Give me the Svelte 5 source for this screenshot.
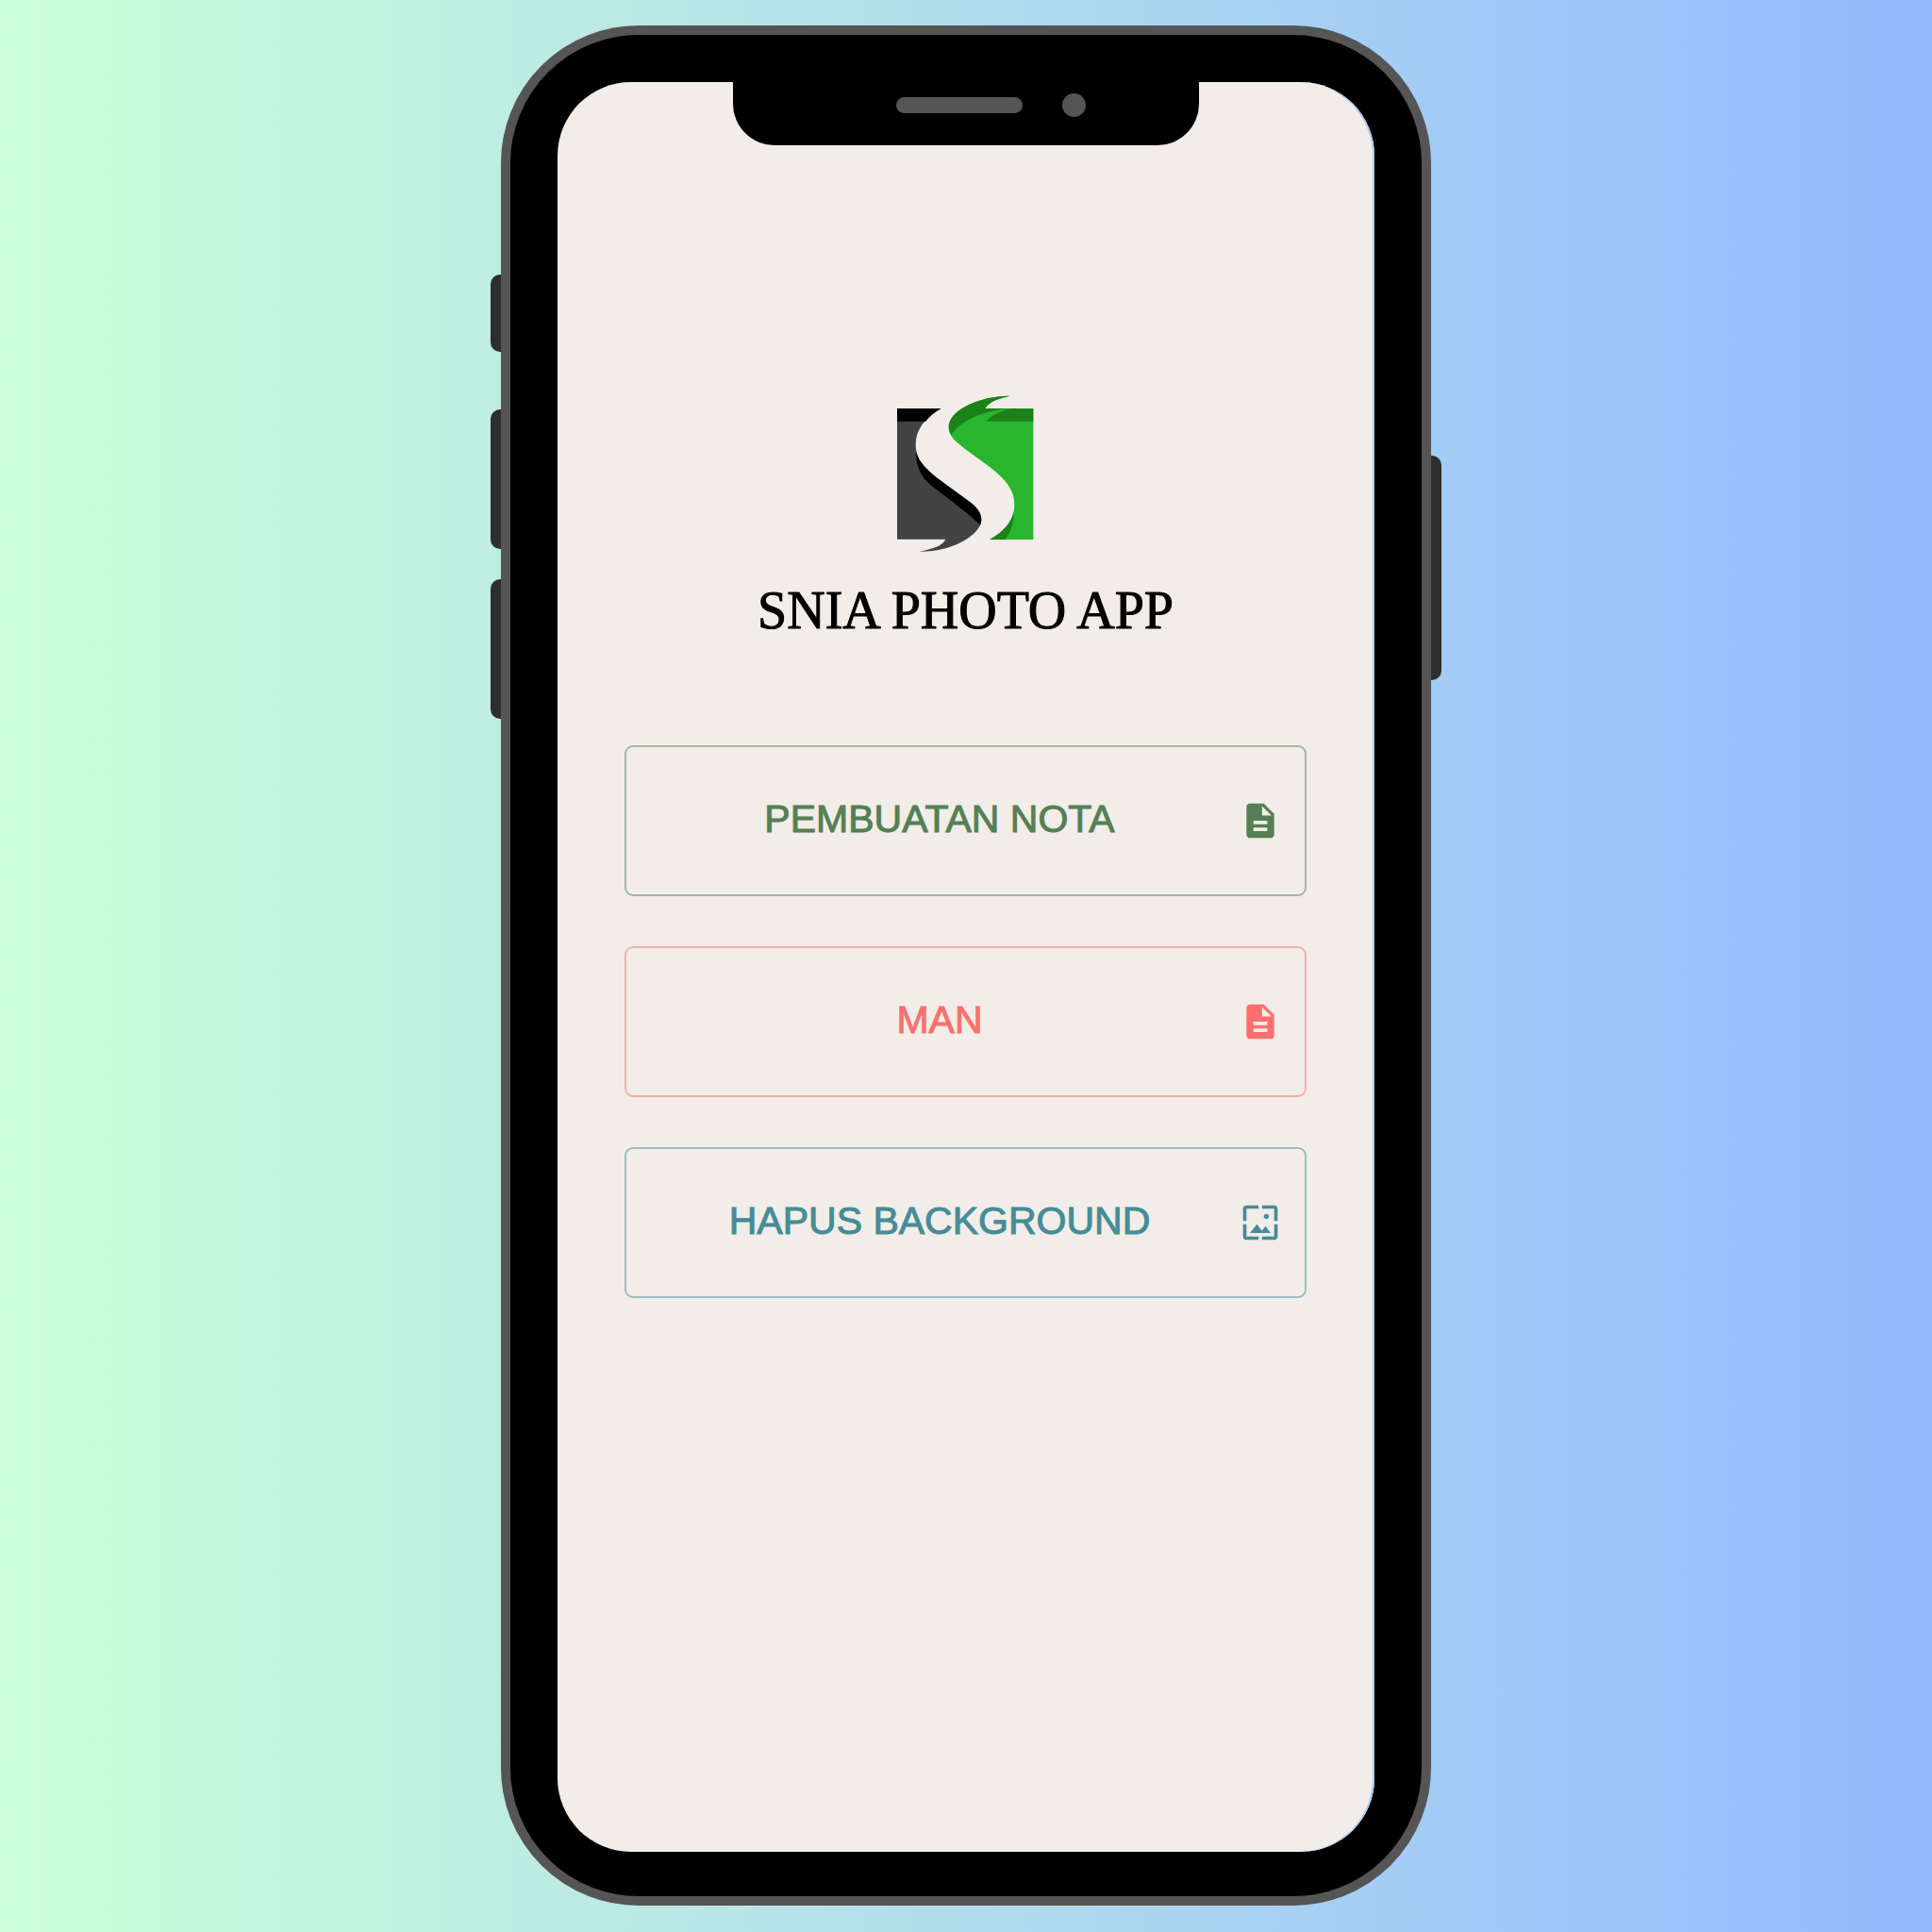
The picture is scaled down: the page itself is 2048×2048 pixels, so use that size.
<script>
  const actions = [
    { label: 'PEMBUATAN NOTA', tone: 'green', icon: 'note' },
    { label: 'MAN', tone: 'coral', icon: 'note' },
    { label: 'HAPUS BACKGROUND', tone: 'teal', icon: 'wallpaper' }
  ];

  const icons = {
    note: 'M14 2H6c-1.1 0-1.99.9-1.99 2L4 20c0 1.1.89 2 1.99 2H18c1.1 0 2-.9 2-2V8l-6-6zm2 16H8v-2h8v2zm0-4H8v-2h8v2zm-3-5V3.500L18.500 9H13z',
    wallpaper:
      'M4 4h7V2H4c-1.100 0-2 .9-2 2v7h2V4zm6 9l-4 5h12l-3-4-2.030 2.710L10 13zm7-4.500c0-.83-.67-1.500-1.500-1.500S14 7.670 14 8.500s.67 1.500 1.500 1.500S17 9.330 17 8.500zM20 2h-7v2h7v7h2V4c0-1.100-.9-2-2-2zm0 18h-7v2h7c1.100 0 2-.9 2-2v-7h-2v7zM4 13H2v7c0 1.100.9 2 2 2h7v-2H4v-7z'
  };
</script>

<div class="stage">
  <div class="phone">
    <span class="key mute"></span>
    <span class="key volume-up"></span>
    <span class="key volume-down"></span>
    <span class="key power"></span>

    <div class="screen">
      <div class="notch">
        <span class="speaker"></span>
        <span class="camera"></span>
      </div>

      <main>
        <svg class="logo" viewBox="92 54 438 504" role="img" aria-label="Snia logo">
          <path fill="#434343" d="M92 99H231C180 128 151 168 151 213C151 290 225 322 327 399C350 417 360 434 360 455C357 497 275 555 163 554C204 545 234 538 246 515H92Z" />
          <path fill="#000" d="M92 99H231C212 110 195 124 183 140H92Z" />
          <path fill="#000" d="M152 236C166 289 224 322 327 399C350 417 360 434 360 455Q359 463 356 470C325 437 261 392 203 346C167 317 152 285 152 236Z" />
          <path fill="#29b52d" d="M451 59C420 66 385 75 372 99H525V516H386C440 486 465 449 465 405C465 318 365 277 283 207C263 190 256 175 256 156C259 102 358 58 451 59Z" />
          <path fill="#1a8219" d="M451 59C420 66 385 75 372 99H458C377 103 300 131 264 182C258 173 256 165 256 156C259 102 358 58 451 59Z" />
          <path fill="#1a8219" d="M458 99H525V140H374C393 119 425 105 458 99Z" />
          <path fill="#1a8219" d="M463 428C463 463 454 493 434 516H386C428 493 454 464 463 428Z" />
        </svg>

        <h1>SNIA PHOTO APP</h1>

        <nav aria-label="Menu">
          {#each actions as action}
            <button type="button" class={action.tone}>
              <span>{action.label}</span>
              <svg viewBox="0 0 24 24" aria-hidden="true"><path d={icons[action.icon]} /></svg>
            </button>
          {/each}
        </nav>
      </main>
    </div>
  </div>
</div>

<style>
  :global(body) {
    margin: 0;
  }

  .stage {
    box-sizing: border-box;
    min-height: 100vh;
    padding: 27px 24px 28px;
    display: flex;
    justify-content: center;
    background: linear-gradient(90deg, #cdffd8, #94b9ff);
  }

  .phone {
    position: relative;
    box-sizing: border-box;
    width: 100%;
    max-width: 986px;
    display: flex;
    padding: 50px 50px 47px;
    border: 10px solid #555;
    border-radius: 146px;
    background: #000;
  }

  .key {
    position: absolute;
    left: -21px;
    width: 11px;
    height: 148px;
    border-radius: 10px 0 0 10px;
    background: #2e2e2e;
  }

  .mute {
    top: 254px;
    height: 82px;
  }

  .volume-up {
    top: 397px;
  }

  .volume-down {
    top: 577px;
  }

  .power {
    top: 446px;
    left: auto;
    right: -21px;
    height: 238px;
    border-radius: 0 10px 10px 0;
  }

  .screen {
    flex: 1;
    display: flex;
    flex-direction: column;
    align-items: center;
    border-radius: 78px;
    background: #f2ede9;
    box-shadow: inset -2px 0 #a5cff5;
  }

  .notch {
    width: 494px;
    max-width: 60%;
    height: 67px;
    display: grid;
    grid-template-columns: 35% 134px 1fr;
    border-radius: 0 0 44px 44px;
    background: #000;
  }

  .speaker {
    grid-column: 2;
    height: 17px;
    margin-top: 16px;
    border-radius: 9px;
    background: #555;
  }

  .camera {
    width: 25px;
    height: 25px;
    margin: 12px 0 0 42px;
    border-radius: 50%;
    background: #555;
  }

  main {
    box-sizing: border-box;
    width: 100%;
    padding: 264px 72px 72px 71px;
    display: flex;
    flex-direction: column;
    align-items: center;
  }

  .logo {
    width: 146px;
    height: 168px;
  }

  h1 {
    margin: 29px 0 0;
    font: 400 56px/64px "Liberation Serif", "Times New Roman", serif;
    color: #000;
    -webkit-text-stroke: 1px #000;
  }

  nav {
    width: 100%;
    margin-top: 111px;
    display: grid;
    gap: 53px;
  }

  button {
    box-sizing: border-box;
    width: 100%;
    min-height: 160px;
    padding: 0 25px;
    display: flex;
    align-items: center;
    gap: 11px;
    border: 2px solid;
    border-radius: 9px;
    background: none;
    font: 400 41px/70px "Liberation Sans", Arial, sans-serif;
    -webkit-text-stroke: 1px currentColor;
    cursor: pointer;
  }

  button span {
    flex: 1;
    padding-bottom: 4px;
    text-align: center;
  }

  button svg {
    width: 44px;
    height: 44px;
    fill: currentColor;
  }

  .green {
    color: #557f55;
    border-color: #a3b8a0;
  }

  .coral {
    color: #fb706e;
    border-color: #f6afab;
  }

  .teal {
    color: #458c97;
    border-color: #9bbdc0;
  }
</style>
